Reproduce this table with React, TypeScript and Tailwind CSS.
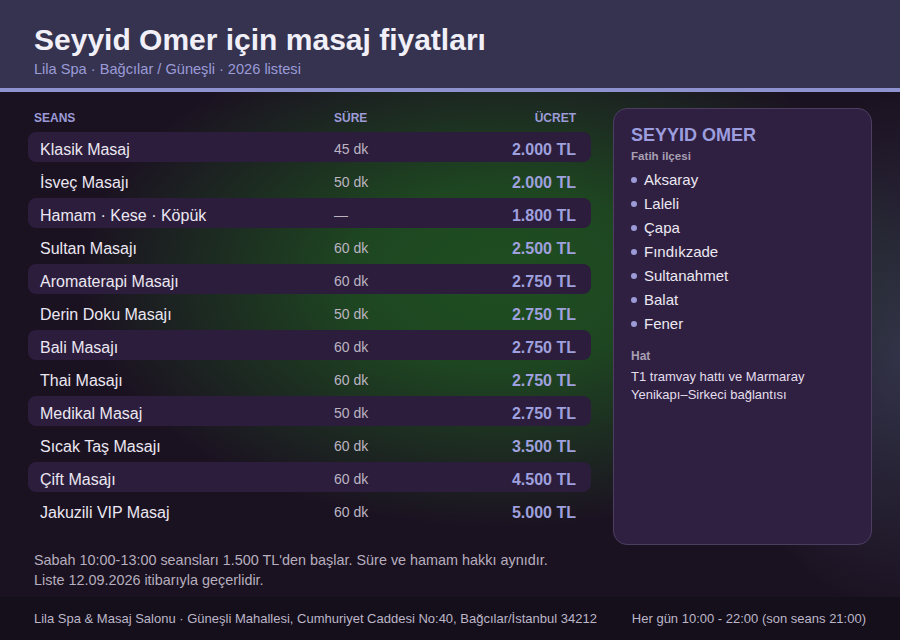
import React from "react";

const rows: [string, string, string][] = [
  ["Klasik Masaj", "45 dk", "2.000 TL"],
  ["İsveç Masajı", "50 dk", "2.000 TL"],
  ["Hamam · Kese · Köpük", "—", "1.800 TL"],
  ["Sultan Masajı", "60 dk", "2.500 TL"],
  ["Aromaterapi Masajı", "60 dk", "2.750 TL"],
  ["Derin Doku Masajı", "50 dk", "2.750 TL"],
  ["Bali Masajı", "60 dk", "2.750 TL"],
  ["Thai Masajı", "60 dk", "2.750 TL"],
  ["Medikal Masaj", "50 dk", "2.750 TL"],
  ["Sıcak Taş Masajı", "60 dk", "3.500 TL"],
  ["Çift Masajı", "60 dk", "4.500 TL"],
  ["Jakuzili VIP Masaj", "60 dk", "5.000 TL"],
];

const places = ["Aksaray", "Laleli", "Çapa", "Fındıkzade", "Sultanahmet", "Balat", "Fener"];

export default function App() {
  return (
    <div
      className="w-[900px] h-[640px] flex flex-col overflow-hidden bg-[#1b1221] text-[#ece8f2]"
      style={{ fontFamily: '"Liberation Sans", Arial, sans-serif' }}
    >
      <header className="h-[92px] shrink-0 bg-[#35334f] border-b-4 border-[#8e93d0] px-[34px] pt-[22px]">
        <h1 className="text-[30px] leading-[36px] font-bold text-[#f1eff8]">Seyyid Omer için masaj fiyatları</h1>
        <p className="mt-[1px] text-[14.6px] leading-[20px] text-[#9c9bd8]">Lila Spa · Bağcılar / Güneşli · 2026 listesi</p>
      </header>

      <main className="flex-1 flex flex-col bg-[radial-gradient(ellipse_420px_250px_at_500px_185px,#1f4e21_0%,#1e4721_35%,transparent_100%),radial-gradient(ellipse_200px_260px_at_910px_260px,#33344a_0%,transparent_100%)]">
        <div className="flex gap-[22px] px-[28px] pt-4 h-[453px]">
          <div className="w-[563px] flex flex-col">
            <div className="h-[20px] flex items-center pl-[6px] pr-[15px] text-[12px] font-bold text-[#9c9bd8] uppercase">
              <span className="w-[300px]">Seans</span>
              <span className="flex-1">Süre</span>
              <span>Ücret</span>
            </div>
            <div className="mt-[4px] flex flex-col gap-[3px]">
              {rows.map((r, i) => (
                <div
                  key={r[0]}
                  className={
                    "h-[30px] flex items-center pt-[5px] pl-[12px] pr-[15px] rounded-[8px] " +
                    (i % 2 === 0 ? "bg-[#2b1d3b]" : "")
                  }
                >
                  <span className="w-[294px] text-[16px] text-[#ebe7f2]">{r[0]}</span>
                  <span className="flex-1 text-[14px] text-[#bcb4c2]">{r[1]}</span>
                  <span className="text-[16px] font-bold text-[#9fa0de]">{r[2]}</span>
                </div>
              ))}
            </div>
          </div>

          <aside className="w-[259px] h-[437px] rounded-[14px] bg-[#2f2041] border border-[#4c3e60] px-[17px] pt-[15px]">
            <div className="text-[18px] leading-[22px] font-bold text-[#9c9dde]">SEYYID OMER</div>
            <div className="mt-[2px] text-[11.6px] leading-[16px] font-bold text-[#a89fb2]">Fatih ilçesi</div>
            <ul className="mt-[4px] flex flex-col">
              {places.map((p) => (
                <li key={p} className="h-[24px] flex items-center text-[15px] text-[#ece8f2]">
                  <span className="w-[6px] h-[6px] rounded-full bg-[#9c9bd8] mr-[7px]" />
                  {p}
                </li>
              ))}
            </ul>
            <div className="mt-[12px] text-[12px] leading-[16px] font-bold text-[#a89fb2]">Hat</div>
            <p className="mt-[4px] text-[13px] leading-[18px] text-[#e4deec]">
              T1 tramvay hattı ve Marmaray Yenikapı–Sirkeci bağlantısı
            </p>
          </aside>
        </div>

        <div className="px-[34px] pt-[5px] text-[14.4px] leading-[20px] text-[#b6aebe]">
          <p>Sabah 10:00-13:00 seansları 1.500 TL'den başlar. Süre ve hamam hakkı aynıdır.</p>
          <p>Liste 12.09.2026 itibarıyla geçerlidir.</p>
        </div>
      </main>

      <footer className="h-[43px] shrink-0 bg-[#150f1b] px-[34px] flex items-center justify-between text-[13px] text-[#bcb6c8]">
        <span>Lila Spa &amp; Masaj Salonu · Güneşli Mahallesi, Cumhuriyet Caddesi No:40, Bağcılar/İstanbul 34212</span>
        <span>Her gün 10:00 - 22:00 (son seans 21:00)</span>
      </footer>
    </div>
  );
}
